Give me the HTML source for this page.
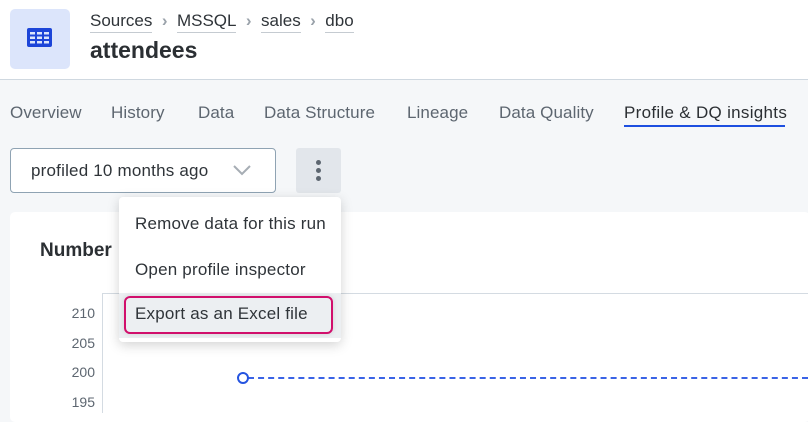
<!DOCTYPE html>
<html><head><style>
*{margin:0;padding:0;box-sizing:border-box}
body{width:808px;height:410px;overflow:hidden;background:#f5f7f9;font-family:"Liberation Sans",sans-serif;position:relative;color:#2b2f33}
.a{position:absolute;white-space:nowrap}
.hdr{position:absolute;left:0;top:0;width:808px;height:80px;background:#fff;border-bottom:1px solid #cfd8e0}
.tab{position:absolute;top:103px;font-size:17px;color:#5d6670;letter-spacing:0.1px}
.bc{font-size:17px;color:#2f3439;border-bottom:1px solid #c5cbd1;padding-bottom:2px}
.sep{color:#9aa2aa;font-size:17px;font-weight:bold}
</style></head><body>
<div class="hdr"></div>
<div class="a" style="left:10px;top:9px;width:60px;height:60px;background:#dce5fb;border-radius:5px"></div>
<svg class="a" style="left:27px;top:28px" width="25" height="19" viewBox="0 0 25 19"><rect x="0" y="0" width="25" height="19" rx="2" fill="#1d45d8"/><g fill="#dce5fb"><rect x="3" y="4" width="5" height="2.5"/><rect x="10" y="4" width="5" height="2.5"/><rect x="17" y="4" width="5" height="2.5"/><rect x="3" y="8.5" width="5" height="2.5"/><rect x="10" y="8.5" width="5" height="2.5"/><rect x="17" y="8.5" width="5" height="2.5"/><rect x="3" y="13" width="5" height="2.5"/><rect x="10" y="13" width="5" height="2.5"/><rect x="17" y="13" width="5" height="2.5"/></g></svg>
<div class="a" style="left:90px;top:11px"><span class="bc">Sources</span><span class="sep">&nbsp; › &nbsp;</span><span class="bc">MSSQL</span><span class="sep">&nbsp; › &nbsp;</span><span class="bc">sales</span><span class="sep">&nbsp; › &nbsp;</span><span class="bc">dbo</span></div>
<div class="a" style="left:90px;top:37px;font-size:23px;font-weight:bold;color:#2b2f33">attendees</div>
<div class="tab" style="left:10px">Overview</div>
<div class="tab" style="left:111px">History</div>
<div class="tab" style="left:198px">Data</div>
<div class="tab" style="left:264px">Data Structure</div>
<div class="tab" style="left:407px">Lineage</div>
<div class="tab" style="left:499px">Data Quality</div>
<div class="tab" style="left:624px;color:#2b2f33;letter-spacing:0.3px">Profile &amp; DQ insights</div>
<div class="a" style="left:624px;top:125px;width:161px;height:2px;background:#1d4fe0"></div>
<div class="a" style="left:10px;top:148px;width:266px;height:45px;background:#fff;border:1px solid #8fa3b3;border-radius:4px"></div>
<div class="a" style="left:31px;top:161px;font-size:17px;color:#2f3439;letter-spacing:0.2px">profiled 10 months ago</div>
<svg class="a" style="left:232px;top:164px" width="20" height="12"><path d="M2 2 L10 10 L18 2" fill="none" stroke="#a6adb4" stroke-width="2"/></svg>
<div class="a" style="left:296px;top:148px;width:45px;height:45px;background:#e2e6eb;border-radius:3px"></div>
<div class="a" style="left:316px;top:160px;width:5px;height:5px;border-radius:50%;background:#5d6670"></div>
<div class="a" style="left:316px;top:168px;width:5px;height:5px;border-radius:50%;background:#5d6670"></div>
<div class="a" style="left:316px;top:176px;width:5px;height:5px;border-radius:50%;background:#5d6670"></div>
<div class="a" style="left:10px;top:212px;width:800px;height:210px;background:#fff;border-radius:5px"></div>
<div class="a" style="left:40px;top:240px;font-size:19px;font-weight:bold;color:#2b2f33">Number</div>
<div class="a" style="left:102px;top:293px;width:706px;height:1px;background:#d4dbe2"></div>
<div class="a" style="left:102px;top:293px;width:1px;height:120px;background:#d4dbe2"></div>
<div class="a" style="left:60px;top:305px;width:35px;text-align:right;font-size:14px;color:#5d6670">210</div>
<div class="a" style="left:60px;top:335px;width:35px;text-align:right;font-size:14px;color:#5d6670">205</div>
<div class="a" style="left:60px;top:364px;width:35px;text-align:right;font-size:14px;color:#5d6670">200</div>
<div class="a" style="left:60px;top:394px;width:35px;text-align:right;font-size:14px;color:#5d6670">195</div>
<div class="a" style="left:248px;top:377px;width:560px;border-top:2px dashed #3a63e6"></div>
<div class="a" style="left:237px;top:372px;width:12px;height:12px;border-radius:50%;border:2.5px solid #2554e0;background:#fff"></div>
<div class="a" style="left:119px;top:197px;width:222px;height:145px;background:#fff;border-radius:4px;box-shadow:0 3px 12px rgba(0,0,0,.18)"></div>
<div class="a" style="left:135px;top:214px;font-size:17px;color:#2f3439;letter-spacing:0.2px">Remove data for this run</div>
<div class="a" style="left:135px;top:260px;font-size:17px;color:#2f3439;letter-spacing:0.2px">Open profile inspector</div>
<div class="a" style="left:119px;top:293px;width:222px;height:45px;background:#eceff2"></div>
<div class="a" style="left:124px;top:296px;width:209px;height:38px;border:2.5px solid #d10f6c;border-radius:6px;box-shadow:0 0 6px rgba(0,0,0,.12)"></div>
<div class="a" style="left:135px;top:304px;font-size:17px;color:#2f3439;letter-spacing:0.2px">Export as an Excel file</div>
</body></html>
